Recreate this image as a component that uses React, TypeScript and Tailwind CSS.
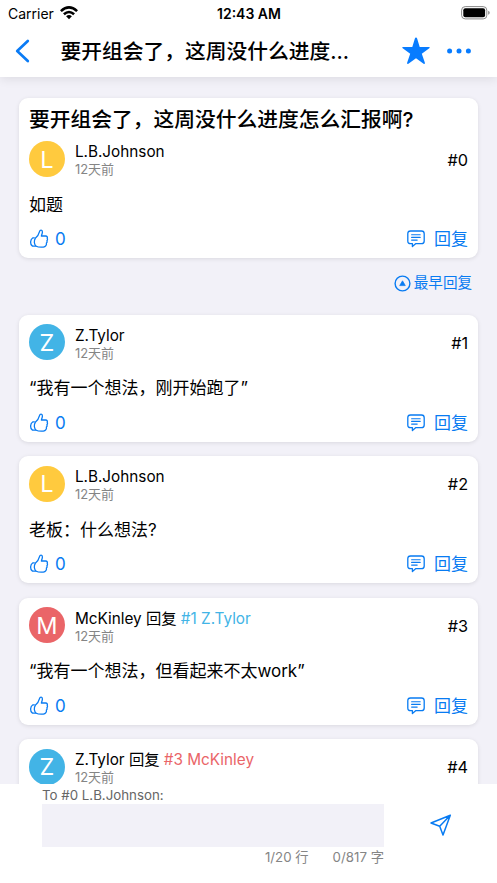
import React from "react";

const cjk = "font-['Inter','Noto_Sans_CJK_SC',sans-serif]";

function ThumbIcon() {
  return (
    <svg className="block h-[20px] w-[20px]" viewBox="0 0 20 20" fill="none" stroke="currentColor" strokeWidth="1.3" strokeLinecap="round" strokeLinejoin="round">
      <path d="M6.3 9.3C8.8 7.3 9.9 5 10.5 2.6C11 .7 13.4 .7 13.4 2.9C13.4 4.5 12.6 5.7 12.4 7H16.5C18.4 7 18.7 8.3 18.1 9.2C18.7 9.9 18.6 11.1 17.9 11.7C18.3 12.5 18 13.6 17.4 14C17.8 16 16.7 17.9 14.3 18.1C11.7 18.3 8.8 18.1 7.3 17.2C4.9 15.6 4.8 11.6 6.3 9.3Z" />
      <path d="M5.3 8.8H3.9C1 10.5 .8 15.4 3.5 17.1H6.6" />
    </svg>
  );
}

function BubbleIcon() {
  return (
    <svg className="block h-[18px] w-[18px]" viewBox="0 0 18 18" fill="none" stroke="currentColor" strokeWidth="1.3" strokeLinecap="round" strokeLinejoin="round">
      <path d="M3.5 1H14.5Q17.2 1 17.2 3.7V10.9Q17.2 13.6 14.5 13.6H8.9L5.4 16.5V13.6H3.5Q.8 13.6 .8 10.9V3.7Q.8 1 3.5 1Z" />
      <path d="M4.6 4.7H13.2M4.6 7.4H13.2M4.6 10.1H10.2" strokeWidth="1.1" />
    </svg>
  );
}

type PostProps = {
  title?: string;
  name: string;
  color: string;
  target?: string;
  targetColor?: string;
  body?: string;
  floor: number;
};

function Post({ title, name, color, target, targetColor, body, floor }: PostProps) {
  return (
    <article className="min-h-[127px] shrink-0 rounded-[9px] bg-white px-[9.5px] pt-[9.3px] pb-[8.8px] shadow-[0_1px_4px_rgba(0,0,0,0.1)]">
      {title && (
        <h2 className="-mt-[1px] mb-[6.9px] h-[28px] whitespace-nowrap text-[20.75px] leading-[28px] font-medium">{title}</h2>
      )}
      <header className="flex h-[36px] items-center">
        <div className={`flex size-[36px] items-center justify-center rounded-full pt-[1px] text-[23.5px] leading-none text-white ${color}`}>{name[0]}</div>
        <div className="ml-[10px] flex-1 pt-[2px]">
          <div className="h-[19px] whitespace-nowrap text-[15.3px] leading-[19px]">
            {name}
            {target && <> 回复 <span className={targetColor}>{target}</span></>}
          </div>
          <div className="h-[16px] text-[13px] leading-[17px] text-[#858585]">12天前</div>
        </div>
        <div className="pt-[2px] text-[16.3px]">#{floor}</div>
      </header>
      {body && (
        <>
          <p className="mt-[15.9px] h-[24px] whitespace-nowrap text-[17px] leading-[24px]">{body}</p>
          <footer className="mt-[12.8px] flex h-[20px] items-center justify-between text-[17px] leading-[20px] text-[#087bf2]">
            <div className="flex items-center gap-[6px]"><ThumbIcon /><span>0</span></div>
            <div className="flex items-center gap-[9px]"><BubbleIcon /><span>回复</span></div>
          </footer>
        </>
      )}
    </article>
  );
}

export default function App() {
  return (
    <div className={`flex h-[883px] w-[497px] flex-col overflow-hidden bg-[#f2f1f8] text-black ${cjk}`}>
      <div className="z-10 h-[77px] shrink-0 bg-white shadow-[0_2px_10px_rgba(0,0,0,0.09)]">
        <div className="grid h-[26px] grid-cols-3 items-center pr-[7px] pl-[8px] text-[14px]">
          <div className="flex items-center gap-[6px]">
            <span>Carrier</span>
            <svg className="h-[14px] w-[18px]" viewBox="0 0 18 14" fill="none" stroke="black" strokeWidth="2.6">
              <path d="M.9 5.1Q9-2.2 17.1 5.1M3.9 8.3Q9 3.7 14.1 8.3" />
              <path d="M6.1 10.2Q9 7.8 11.9 10.2L9 13.2Z" fill="black" stroke="none" />
            </svg>
          </div>
          <span className="whitespace-nowrap text-center font-semibold">12:43 AM</span>
          <svg className="-mt-[1px] h-[14px] w-[29px] justify-self-end" viewBox="0 0 29 14">
            <rect x=".6" y=".6" width="25.2" height="12.3" rx="3.6" fill="none" stroke="#888" strokeWidth="1" />
            <rect x="2.3" y="2.3" width="21.8" height="8.9" rx="2" />
            <path d="M27.2 4.8Q28.7 5.2 28.7 6.8Q28.7 8.4 27.2 8.8Z" fill="#888" />
          </svg>
        </div>
        <div className="flex h-[50px] items-center pl-[15px]">
          <svg className="h-[24px] w-[15px]" viewBox="0 0 15 24" fill="none" stroke="#0a7bf5" strokeWidth="2.7" strokeLinecap="round" strokeLinejoin="round"><path d="M12.8 2L2.2 12L12.8 22" /></svg>
          <h1 className="mt-[1px] ml-[30.5px] w-[330.5px] whitespace-nowrap text-[20.75px] leading-[28px] font-medium">要开组会了，这周没什么进度...</h1>
          <svg className="ml-[11px] h-[28px] w-[28px]" viewBox="0 0 28 28" fill="#087cff"><path d="M14 .5Q14.8 .5 15.2 1.8L17.7 10H26.8Q28.6 10.2 27.3 11.3L19.8 16.7L22.8 25.6Q23.2 27.5 21.6 26.8L14 21.2L6.4 26.8Q4.8 27.5 5.2 25.6L8.2 16.7L.7 11.3Q-.6 10.2 1.2 10H10.3L12.8 1.8Q13.2 .5 14 .5Z" /></svg>
          <svg className="ml-[17px] h-[6px] w-[24px]" viewBox="0 0 24 6" fill="#087cff"><circle cx="2.6" cy="3" r="2.5" /><circle cx="12" cy="3" r="2.5" /><circle cx="21.4" cy="3" r="2.5" /></svg>
        </div>
      </div>

      <main className="flex min-h-0 flex-1 flex-col overflow-hidden px-[19.4px] pt-[20.6px]">
        <Post title="要开组会了，这周没什么进度怎么汇报啊?" name="L.B.Johnson" color="bg-[#ffca3e]" body="如题" floor={0} />
        <div className="mt-[15px] mb-[21.6px] flex h-[20px] shrink-0 items-center justify-end gap-[3px] pr-[5.5px] text-[14.6px] leading-[20px] text-[#087bf2]">
          <svg className="h-[17px] w-[17px]" viewBox="0 0 17 17" fill="none" stroke="currentColor" strokeWidth="1.4"><circle cx="8.5" cy="8.5" r="7.4" /><path d="M8.5 5.8L11.3 10.6H5.7Z" fill="currentColor" strokeWidth=".7" strokeLinejoin="round" /></svg>
          <span>最早回复</span>
        </div>
        <div className="flex flex-col gap-[14.5px]">
          <Post name="Z.Tylor" color="bg-[#42b4e6]" body="“我有一个想法，刚开始跑了”" floor={1} />
          <Post name="L.B.Johnson" color="bg-[#ffca3e]" body="老板：什么想法?" floor={2} />
          <Post name="McKinley" color="bg-[#ea6568]" target="#1 Z.Tylor" targetColor="text-[#42b4e6]" body="“我有一个想法，但看起来不太work”" floor={3} />
          <Post name="Z.Tylor" color="bg-[#42b4e6]" target="#3 McKinley" targetColor="text-[#ea6568]" floor={4} />
        </div>
      </main>

      <div className="z-10 flex h-[99px] shrink-0 bg-white pl-[42px]">
        <div className="w-[342px] text-[13.3px]">
          <div className="h-[20px] leading-[22px] text-[#666]">To #0 L.B.Johnson:</div>
          <div className="h-[43px] bg-[#f2f1f8]" />
          <div className="flex h-[21px] items-center justify-end gap-[24px] text-[#858585]"><span>1/20 行</span><span>0/817 字</span></div>
        </div>
        <svg className="mt-[30px] ml-[46px] h-[22px] w-[22px]" viewBox="0 0 22 22" fill="none" stroke="#087bf2" strokeWidth="1.5" strokeLinecap="round" strokeLinejoin="round"><path d="M20.3 1.3L1 9L9.7 12.3L13 21L20.3 1.3L9.7 12.3M1 9L20.3 1.3" /></svg>
      </div>
    </div>
  );
}
